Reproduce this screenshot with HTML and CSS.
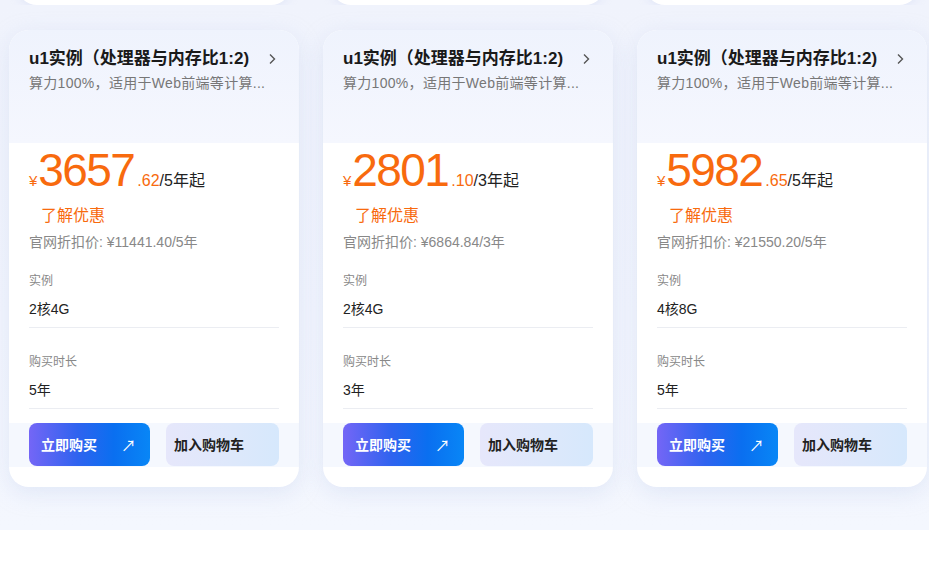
FILE: index.html
```html
<!DOCTYPE html>
<html lang="zh">
<head>
<meta charset="utf-8">
<title>u1实例</title>
<link rel="stylesheet" href="styles.css">
</head>
<body>
<section class="section">
  <div class="prev-row">
    <div class="prev-col"><div class="prev-card"></div></div>
    <div class="prev-col"><div class="prev-card"></div></div>
    <div class="prev-col"><div class="prev-card"></div></div>
  </div>
  <div class="cards">
    <div class="card">
      <div class="card-head">
        <div class="title-row"><span class="title">u1实例（处理器与内存比1:2)</span><svg class="chev" viewBox="0 0 10 14" width="10" height="14"><path d="M3 2.5 L7.5 7 L3 11.5" fill="none" stroke="#555" stroke-width="1.4"/></svg></div>
        <div class="subtitle">算力100%，适用于Web前端等计算...</div>
      </div>
      <div class="card-body">
        <div class="price"><span class="yen">¥</span><span class="big">3657</span><span class="dec">.62</span><span class="unit">/5年起</span></div>
        <div class="promo">了解优惠</div>
        <div class="orig">官网折扣价: ¥11441.40/5年</div>
        <div class="field"><div class="label">实例</div><div class="value">2核4G</div></div>
        <div class="field"><div class="label">购买时长</div><div class="value">5年</div></div>
      </div>
      <div class="card-foot">
        <div class="btn-buy"><span>立即购买</span><span class="arrow">↗</span></div>
        <div class="btn-cart">加入购物车</div>
      </div>
    </div>
    <div class="card">
      <div class="card-head">
        <div class="title-row"><span class="title">u1实例（处理器与内存比1:2)</span><svg class="chev" viewBox="0 0 10 14" width="10" height="14"><path d="M3 2.5 L7.5 7 L3 11.5" fill="none" stroke="#555" stroke-width="1.4"/></svg></div>
        <div class="subtitle">算力100%，适用于Web前端等计算...</div>
      </div>
      <div class="card-body">
        <div class="price"><span class="yen">¥</span><span class="big">2801</span><span class="dec">.10</span><span class="unit">/3年起</span></div>
        <div class="promo">了解优惠</div>
        <div class="orig">官网折扣价: ¥6864.84/3年</div>
        <div class="field"><div class="label">实例</div><div class="value">2核4G</div></div>
        <div class="field"><div class="label">购买时长</div><div class="value">3年</div></div>
      </div>
      <div class="card-foot">
        <div class="btn-buy"><span>立即购买</span><span class="arrow">↗</span></div>
        <div class="btn-cart">加入购物车</div>
      </div>
    </div>
    <div class="card">
      <div class="card-head">
        <div class="title-row"><span class="title">u1实例（处理器与内存比1:2)</span><svg class="chev" viewBox="0 0 10 14" width="10" height="14"><path d="M3 2.5 L7.5 7 L3 11.5" fill="none" stroke="#555" stroke-width="1.4"/></svg></div>
        <div class="subtitle">算力100%，适用于Web前端等计算...</div>
      </div>
      <div class="card-body">
        <div class="price"><span class="yen">¥</span><span class="big">5982</span><span class="dec">.65</span><span class="unit">/5年起</span></div>
        <div class="promo">了解优惠</div>
        <div class="orig">官网折扣价: ¥21550.20/5年</div>
        <div class="field"><div class="label">实例</div><div class="value">4核8G</div></div>
        <div class="field"><div class="label">购买时长</div><div class="value">5年</div></div>
      </div>
      <div class="card-foot">
        <div class="btn-buy"><span>立即购买</span><span class="arrow">↗</span></div>
        <div class="btn-cart">加入购物车</div>
      </div>
    </div>
  </div>
</section>
</body>
</html>
```
FILE: styles.css
```css
* { box-sizing: border-box; }
html, body { margin: 0; padding: 0; background: #fff; }
body {
  font-family: "Liberation Sans", "Noto Sans CJK SC", sans-serif;
  color: #222;
  width: 929px;
  height: 578px;
  overflow: hidden;
}
.section {
  height: 530px;
  background: linear-gradient(180deg, #f0f3fc 0%, #f2f5fd 60%, #f4f7fe 100%);
  padding-left: 9px;
}
.prev-row {
  display: flex;
  gap: 24px;
  height: 5px;
  overflow: hidden;
  align-items: flex-end;
}
.prev-col {
  width: 290px;
  padding: 0 8px;
  display: flex;
  align-items: flex-end;
  height: 5px;
}
.prev-card {
  width: 100%;
  height: 40px;
  flex-shrink: 0;
  background: #fff;
  border-radius: 0 0 20px 20px;
  box-shadow: 0 2px 10px rgba(200, 210, 240, 0.35);
}
.cards {
  display: flex;
  gap: 24px;
  margin-top: 25px;
}
.card {
  width: 290px;
  height: 457px;
  border-radius: 20px;
  background: #fff;
  box-shadow: 0 6px 22px rgba(190, 202, 235, 0.35);
  overflow: hidden;
  display: flex;
  flex-direction: column;
}
.card-head {
  height: 113px;
  padding: 17px 20px 0 20px;
  background: linear-gradient(180deg, #eff3fd 0%, #f5f7fe 100%);
}
.title-row {
  display: flex;
  align-items: center;
  justify-content: space-between;
  height: 24px;
  padding-right: 2px;
}
.title {
  font-size: 17px;
  font-weight: bold;
  color: #1a1a1a;
  line-height: 24px;
}
.chev { display: block; }
.subtitle {
  margin-top: 2px;
  font-size: 14px;
  line-height: 20px;
  color: #777;
  white-space: nowrap;
  letter-spacing: 0.3px;
}
.card-body {
  background: #fff;
  padding: 3px 20px 0 20px;
  height: 280px;
}
.price {
  display: flex;
  align-items: baseline;
  height: 48px;
  line-height: 48px;
  color: #f86a0e;
}
.yen { font-size: 15px; margin-right: 1px; }
.big { font-size: 46px; letter-spacing: -1.6px; }
.dec { font-size: 16px; margin-left: 3px; }
.unit { font-size: 16px; color: #222; }
.promo {
  margin-top: 10px;
  padding-left: 12px;
  font-size: 16px;
  line-height: 24px;
  color: #f86a0e;
}
.orig {
  margin-top: 4px;
  font-size: 14px;
  line-height: 20px;
  color: #888;
}
.field {
  margin-top: 19px;
  border-bottom: 1px solid #ebedf2;
  padding-bottom: 8px;
}
.field + .field { margin-top: 24px; }
.label {
  padding-top: 1px;
  font-size: 12px;
  line-height: 18px;
  color: #888;
}
.value {
  margin-top: 9px;
  font-size: 14px;
  line-height: 20px;
  color: #222;
}
.card-foot {
  height: 44px;
  background: #f5f8fe;
  display: flex;
  gap: 16px;
  padding: 0 20px;
}
.btn-buy {
  width: 121px;
  height: 43px;
  border-radius: 8px;
  background: linear-gradient(90deg, #7466f6 0%, #2f63ef 40%, #0a6ff0 70%, #0886f6 100%);
  color: #fff;
  font-size: 14px;
  font-weight: bold;
  display: flex;
  align-items: center;
  justify-content: space-between;
  padding: 0 14px 1px 12px;
}
.arrow { font-weight: normal; font-size: 15px; }
.btn-cart {
  width: 113px;
  height: 43px;
  border-radius: 8px;
  background: linear-gradient(90deg, #e6e7fb 0%, #dde8fb 60%, #d6e8fc 100%);
  color: #222;
  font-size: 14px;
  font-weight: bold;
  display: flex;
  align-items: center;
  padding: 0 0 1px 8px;
}
```
